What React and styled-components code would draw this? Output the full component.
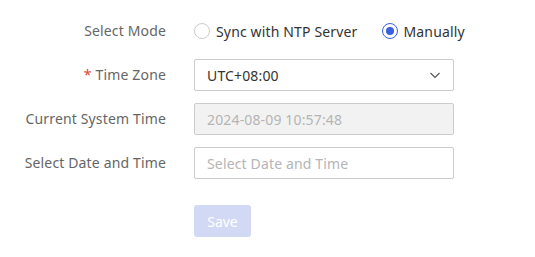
import React from "react";
import styled, { createGlobalStyle } from "styled-components";

const Global = createGlobalStyle`
  body {
    margin: 0;
    background: #ffffff;
    font-family: "Noto Sans", "Open Sans", sans-serif;
  }
`;

const Form = styled.div`
  display: grid;
  grid-template-columns: 166px 260px;
  column-gap: 28px;
  row-gap: 12px;
  padding-top: 15px;
  align-items: center;
  letter-spacing: 0.15px;
`;

const Label = styled.div`
  height: 32px;
  line-height: 32px;
  text-align: right;
  font-size: 14px;
  color: #666;
  white-space: nowrap;
`;

const Star = styled.span`
  color: #e2463a;
  margin-right: 4px;
`;

const RadioGroup = styled.div`
  display: flex;
  align-items: center;
  height: 32px;
  gap: 24px;
  white-space: nowrap;
`;

const RadioItem = styled.label`
  display: flex;
  align-items: center;
  gap: 6px;
  font-size: 14px;
  color: #333;
`;

const Circle = styled.span`
  box-sizing: border-box;
  width: 16px;
  height: 16px;
  border-radius: 50%;
  border: 1px solid ${(p) => (p.$on ? "#3a5fe0" : "#cccccc")};
  display: flex;
  align-items: center;
  justify-content: center;

  &::after {
    content: "";
    width: 8px;
    height: 8px;
    border-radius: 50%;
    background: ${(p) => (p.$on ? "#3a5fe0" : "transparent")};
  }
`;

const Box = styled.div`
  box-sizing: border-box;
  height: 32px;
  border: 1px solid #cccccc;
  border-radius: 2px;
  padding: 0 12px;
  display: flex;
  align-items: center;
  justify-content: space-between;
  font-size: 14px;
  color: ${(p) => (p.$muted ? "#b5b5b5" : "#333")};
  background: ${(p) => (p.$disabled ? "#f2f2f2" : "#fff")};
`;

const Chevron = () => (
  <svg width="12" height="12" viewBox="0 0 12 12">
    <path d="M1.5 4 L6 8.5 L10.5 4" fill="none" stroke="#555" strokeWidth="1.2" />
  </svg>
);

const SaveButton = styled.button`
  grid-column: 2;
  justify-self: start;
  margin-top: 14px;
  width: 57px;
  height: 32px;
  border: none;
  border-radius: 3px;
  background: #d2d9f5;
  color: #fff;
  font-family: inherit;
  font-size: 14px;
`;

export default function App() {
  return (
    <>
      <Global />
      <Form>
        <Label>Select Mode</Label>
        <RadioGroup>
          <RadioItem>
            <Circle />
            Sync with NTP Server
          </RadioItem>
          <RadioItem>
            <Circle $on />
            Manually
          </RadioItem>
        </RadioGroup>

        <Label>
          <Star>*</Star>Time Zone
        </Label>
        <Box>
          UTC+08:00
          <Chevron />
        </Box>

        <Label>Current System Time</Label>
        <Box $muted $disabled>
          2024-08-09 10:57:48
        </Box>

        <Label>Select Date and Time</Label>
        <Box $muted>Select Date and Time</Box>

        <SaveButton>Save</SaveButton>
      </Form>
    </>
  );
}
